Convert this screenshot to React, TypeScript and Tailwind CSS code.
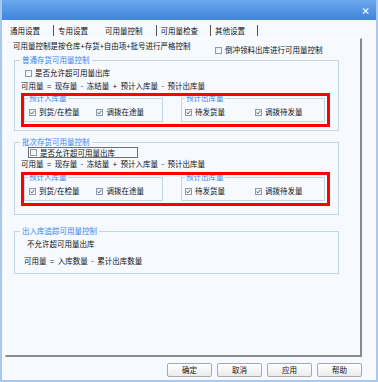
import React from 'react'

const Check = ({ checked = false }: { checked?: boolean }) => (
  <span className='w-[7px] h-[7px] border border-[#8d9aab] bg-gradient-to-br from-[#e6ebf1] to-white flex items-center justify-center shrink-0'>
    {checked && (
      <svg width='5' height='5' viewBox='0 0 5 5'>
        <path d='M0.6 2.6 L2 3.9 L4.4 0.9' fill='none' stroke='#4b5563' strokeWidth='0.9' />
      </svg>
    )}
  </span>
)

const CheckItem = ({ label, checked, className = '' }: { label: string; checked?: boolean; className?: string }) => (
  <div className={'flex items-center gap-[3px] h-[10px] leading-[10px] ' + className}>
    <Check checked={checked} />
    <span>{label}</span>
  </div>
)

const Sep = ({ className = '' }: { className?: string }) => (
  <span className={'w-[1px] h-[11px] bg-[#555] ' + className} />
)

const Btn = ({ text }: { text: string }) => (
  <button className='w-[45px] h-[14px] rounded-[2px] border border-[#a9a9a9] bg-gradient-to-b from-white to-[#ebebeb] leading-[12px] text-[7.5px]'>
    {text}
  </button>
)

// 预计入库量 / 预计出库量 pair, highlighted with the red frame
const PlanBoxes = ({ top }: { top: string }) => (
  <div className={'ml-[9px] w-[303px] flex gap-[18px] outline-3 outline-[#ff0000] pb-[2px] ' + top}>
    <fieldset className='border border-[#c6d4e4] w-[139px] -mt-[2px] pb-[4px]'>
      <legend className='ml-[3px] px-[1px] leading-[8px] text-[#3a86ec]'>预计入库量</legend>
      <div className='flex mt-[5px]'>
        <CheckItem className='ml-[4px]' label='到货/在检量' checked />
        <CheckItem className='ml-[17px]' label='调拨在途量' checked />
      </div>
    </fieldset>
    <fieldset className='border border-[#c6d4e4] w-[144px] -mt-[2px] pb-[4px]'>
      <legend className='ml-[3px] px-[1px] leading-[8px] text-[#3a86ec]'>预计出库量</legend>
      <div className='flex mt-[5px]'>
        <CheckItem className='ml-[3px]' label='待发货量' checked />
        <CheckItem className='ml-[30px]' label='调拨待发量' checked />
      </div>
    </fieldset>
  </div>
)

// terms and operators, e.g. ['可用量', '=', '现存量', ...]
const Formula = ({ parts, className = '' }: { parts: string[]; className?: string }) => (
  <div className={'h-[10px] leading-[10px] flex ' + className}>
    {parts.map((p, i) => (
      <span key={i} className={i % 2 ? 'mx-[3.5px]' : ''}>{p}</span>
    ))}
  </div>
)

const stockFormula = ['可用量', '=', '现存量', '-', '冻结量', '+', '预计入库量', '-', '预计出库量']

export default function App() {
  return (
    <div className="w-[378px] h-[382px] flex flex-col bg-[#f6f9fe] border-l-2 border-r-2 border-b-2 border-[#a9c8ee] text-[7.5px] text-[#111] font-['Noto_Sans_CJK_SC','Noto_Sans',sans-serif] overflow-hidden">
      {/* title bar */}
      <div className='h-[20px] shrink-0 bg-gradient-to-b from-[#6aa8ec] to-[#3f85dc] flex items-center justify-end pr-[6px]'>
        <span className='text-white font-bold text-[9px] leading-none'>×</span>
      </div>

      {/* tabs */}
      <div className='h-[18px] shrink-0 flex items-center pt-[3px] leading-[10px]'>
        <span className='ml-[8px]'>通用设置</span>
        <Sep className='ml-[13px]' />
        <span className='ml-[4px]'>专用设置</span>
        <span className='ml-[17px]'>可用量控制</span>
        <Sep className='ml-[13px]' />
        <span className='ml-[4px]'>可用量检查</span>
        <Sep className='ml-[12px]' />
        <span className='ml-[4px]'>其他设置</span>
        <Sep className='ml-[12px]' />
      </div>

      {/* tab page */}
      <div className='ml-[3px] w-[357px] h-[319px] shrink-0 border-l border-t border-white border-r-2 border-b-2 border-r-[#8a8a8a] border-b-[#8a8a8a]'>
        <div className='ml-[7px] mt-[2px] h-[10px] leading-[10px]'>可用量控制是按仓库+存货+自由项+批号进行严格控制</div>
        <CheckItem className='ml-[209px] -mt-[6px]' label='倒冲领料出库进行可用量控制' />

        <fieldset className='border border-[#c6d4e4] w-[325px] ml-[8px] pb-[6px]'>
          <legend className='ml-[5px] px-[2px] leading-[10px] text-[#3a86ec]'>普通存货可用量控制</legend>
          <CheckItem className='ml-[10px] mt-[3px]' label='是否允许超可用量出库' />
          <Formula className='ml-[6px] mt-[3px]' parts={stockFormula} />
          <PlanBoxes top='mt-[5px]' />
        </fieldset>

        <fieldset className='border border-[#c6d4e4] w-[325px] ml-[8px] mt-[6px] pb-[11px]'>
          <legend className='ml-[5px] px-[2px] leading-[10px] text-[#3a86ec]'>批次存货可用量控制</legend>
          <div className='ml-[13px] w-[110px] h-[11px] border border-[#6e6e6e] flex items-center'>
            <CheckItem className='ml-[1px]' label='是否允许超可用量出库' />
          </div>
          <Formula className='ml-[6px] mt-[1px]' parts={stockFormula} />
          <PlanBoxes top='mt-[6px]' />
        </fieldset>

        <fieldset className='border border-[#c6d4e4] w-[325px] ml-[8px] mt-[11px] pb-[7px]'>
          <legend className='ml-[5px] px-[2px] leading-[10px] text-[#3a86ec]'>出入库追踪可用量控制</legend>
          <div className='ml-[12px] mt-[3px] h-[10px] leading-[10px]'>不允许超可用量出库</div>
          <Formula className='ml-[9px] mt-[7px]' parts={['可用量', '=', '入库数量', '-', '累计出库数量']} />
        </fieldset>
      </div>

      {/* buttons */}
      <div className='flex justify-end gap-[5px] pr-[14px] pt-[6px]'>
        <Btn text='确定' />
        <Btn text='取消' />
        <Btn text='应用' />
        <Btn text='帮助' />
      </div>
    </div>
  )
}
